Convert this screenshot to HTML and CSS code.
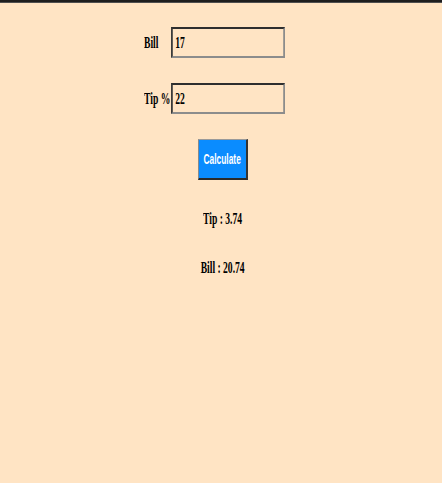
FILE: index.html
```html
<!DOCTYPE html>
<html>
<head>
<meta charset="utf-8">
<title>Tip Calculator</title>
<link rel="stylesheet" href="styles.css">
</head>
<body>
<div class="topbar"></div>
<div class="stage">
  <div class="form">
    <label class="label" for="bill">Bill</label>
    <input class="field" id="bill" type="text" value="17">
    <label class="label" for="tip">Tip %</label>
    <input class="field" id="tip" type="text" value="22">
  </div>
  <button class="calc" type="button"><span class="calc-text">Calculate</span></button>
  <div class="result result-tip">Tip : 3.74</div>
  <div class="result result-bill">Bill : 20.74</div>
</div>
</body>
</html>
```
FILE: styles.css
```css
html, body {
  margin: 0;
  padding: 0;
  background: #ffe4c4;
  overflow: hidden;
  height: 100%;
}

.topbar {
  height: 2px;
  background: #1e1e1e;
  border-bottom: 1px solid #4f4f4f;
}

.stage {
  padding: 24px 0 0 4px;
  display: flex;
  flex-direction: column;
  align-items: center;
  font-family: "Liberation Serif", "Times New Roman", serif;
  color: #000;
}

.form {
  display: grid;
  grid-template-columns: 26.4px 114px;
  column-gap: 0.6px;
  row-gap: 25px;
  align-items: center;
  margin-right: 17px;
}

.label {
  display: block;
  white-space: nowrap;
  font-size: 16px;
  font-weight: bold;
  line-height: 18px;
  transform: scaleX(0.6);
  transform-origin: left center;
}

.field {
  box-sizing: border-box;
  width: 190px;
  height: 31px;
  margin: 0;
  padding: 0 4px;
  background: transparent;
  border-style: solid;
  border-width: 2px 3px 2px 3px;
  border-color: #2e2e2e #8c8c8c #8c8c8c #3a3a3a;
  font-family: "Liberation Serif", "Times New Roman", serif;
  font-size: 16px;
  font-weight: bold;
  color: #000;
  outline: none;
  transform: scaleX(0.6);
  transform-origin: left center;
}

.calc {
  box-sizing: border-box;
  width: 50px;
  height: 41px;
  margin: 25px 0 0 0;
  padding: 0;
  display: flex;
  justify-content: center;
  align-items: center;
  background: #0a8cff;
  border-style: solid;
  border-width: 1px 2px 2px 1px;
  border-color: #9a9a9a #333 #2a2a2a #8a8a8a;
}

.calc-text {
  display: block;
  white-space: nowrap;
  color: #fff;
  font-family: "Liberation Sans", Arial, sans-serif;
  font-size: 14px;
  font-weight: bold;
  transform: scaleX(0.6);
}

.result {
  font-size: 16px;
  font-weight: bold;
  line-height: 18px;
  white-space: nowrap;
  transform: scaleX(0.6);
}

.result-tip {
  margin-top: 30px;
}

.result-bill {
  margin-top: 30.6px;
}
```
